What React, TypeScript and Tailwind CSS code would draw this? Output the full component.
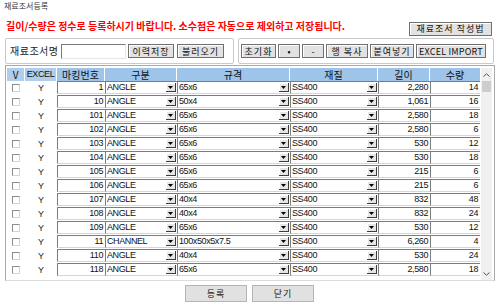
import React from "react";

const KR = "font-['Noto_Sans_CJK_KR','Noto_Sans',sans-serif]";
const NUM = "font-['Liberation_Sans','Noto_Sans_CJK_KR',sans-serif]";

type Row = {
  no: string;
  kind: string;
  spec: string;
  mat: string;
  len: string;
  qty: string;
};

const rows: Row[] = [
  { no: "1", kind: "ANGLE", spec: "65x6", mat: "SS400", len: "2,280", qty: "14" },
  { no: "10", kind: "ANGLE", spec: "50x4", mat: "SS400", len: "1,061", qty: "16" },
  { no: "101", kind: "ANGLE", spec: "65x6", mat: "SS400", len: "2,580", qty: "18" },
  { no: "102", kind: "ANGLE", spec: "65x6", mat: "SS400", len: "2,580", qty: "6" },
  { no: "103", kind: "ANGLE", spec: "65x6", mat: "SS400", len: "530", qty: "12" },
  { no: "104", kind: "ANGLE", spec: "65x6", mat: "SS400", len: "530", qty: "18" },
  { no: "105", kind: "ANGLE", spec: "65x6", mat: "SS400", len: "215", qty: "6" },
  { no: "106", kind: "ANGLE", spec: "65x6", mat: "SS400", len: "215", qty: "6" },
  { no: "107", kind: "ANGLE", spec: "40x4", mat: "SS400", len: "832", qty: "48" },
  { no: "108", kind: "ANGLE", spec: "40x4", mat: "SS400", len: "832", qty: "24" },
  { no: "109", kind: "ANGLE", spec: "65x6", mat: "SS400", len: "530", qty: "12" },
  { no: "11", kind: "CHANNEL", spec: "100x50x5x7.5", mat: "SS400", len: "6,260", qty: "4" },
  { no: "110", kind: "ANGLE", spec: "40x4", mat: "SS400", len: "530", qty: "24" },
  { no: "118", kind: "ANGLE", spec: "65x6", mat: "SS400", len: "2,580", qty: "18" },
];

function WinButton({ children, className }: { children: React.ReactNode; className?: string }) {
  return (
    <button
      type="button"
      className={`flex h-[14px] items-center justify-center whitespace-nowrap border border-[#6f6f6f] bg-[#e2e2e2] text-[9px] leading-none text-[#111] shadow-[inset_1px_1px_0_#fff] ${KR} ${className ?? ""}`}
    >
      {children}
    </button>
  );
}

function Arrow() {
  return (
    <span className="absolute bottom-[1px] right-[1px] flex h-[9px] w-[10px] items-center justify-center border-b border-r border-[#3c3c3c] bg-[#e6e6e6] shadow-[inset_1px_1px_0_#fff]">
      <svg width="5" height="3" viewBox="0 0 5 3">
        <path d="M0 0h5L2.5 3z" fill="#000" />
      </svg>
    </span>
  );
}

function EditCell({ w, children, align = "right" }: { w: string; children: React.ReactNode; align?: "left" | "right" }) {
  return (
    <div
      className={`relative h-[13px] shrink-0 overflow-hidden whitespace-nowrap border-l border-t border-[#7c7c7c] border-b-[#d6d6d6] border-b bg-white text-[9px] leading-[11px] tracking-[-0.4px] text-[#111] ${NUM} ${w} ${
        align === "right" ? "pr-[2px] text-right" : "pl-[1px] text-left"
      }`}
    >
      {children}
    </div>
  );
}

function ComboCell({ w, value }: { w: string; value: string }) {
  return (
    <EditCell w={w} align="left">
      {value}
      <Arrow />
    </EditCell>
  );
}

export default function App() {
  return (
    <div className={`relative h-[306px] w-[499px] overflow-hidden bg-white text-black ${KR}`}>
      {/* 제목 */}
      <div className="pl-[4px] pt-[1px] text-[8px] leading-[10px] text-[#333]">재료조서등록</div>

      {/* 안내 */}
      <div className="mt-[8px] flex h-[14px] items-center justify-between pl-[6px] pr-[7px]">
        <span className="text-[10px] font-bold leading-none text-[#ff0000]">
          길이/수량은 정수로 등록하시기 바랍니다. 소수점은 자동으로 제외하고 저장됩니다.
        </span>
        <WinButton className="mt-[5px] w-[83px] tracking-[1px]">재료조서 작성법</WinButton>
      </div>

      {/* 툴바 */}
      <div className="mt-[5px] flex h-[26px] gap-[4px] pl-[5px] pr-[5px]">
        <div className="flex w-[229px] items-center rounded-[2px] border border-[#c9c9c9] pl-[4px] shadow-[inset_1px_1px_0_#fff]">
          <span className="w-[51px] text-[10px] leading-none tracking-[0.5px] text-[#222]">재료조서명</span>
          <span className="h-[15px] w-[65px] border-l border-t border-[#7a7a7a] border-b border-r border-b-[#e5e5e5] border-r-[#e5e5e5] bg-white" />
          <WinButton className="ml-[2px] w-[46px] tracking-[1px]">이력저장</WinButton>
          <WinButton className="ml-[3px] w-[47px] tracking-[1px]">불러오기</WinButton>
        </div>
        <div className="flex flex-1 items-center gap-[2px] rounded-[2px] border border-[#c9c9c9] pl-[2px] shadow-[inset_1px_1px_0_#fff]">
          <WinButton className="w-[35px] tracking-[1px]">초기화</WinButton>
          <WinButton className="w-[22px]">•</WinButton>
          <WinButton className="w-[22px]">-</WinButton>
          <WinButton className="w-[42px] tracking-[1px]">행 복사</WinButton>
          <WinButton className="w-[44px] tracking-[1px]">붙여넣기</WinButton>
          <WinButton className={`w-[70px] tracking-[0.2px] ${NUM}`}>EXCEL IMPORT</WinButton>
        </div>
      </div>

      {/* 그리드 */}
      <div className="ml-[5px] mt-[1px] flex h-[216px] w-[490px] border border-[#a9a9a9] border-b-[#dcdcdc] pl-[1px] pt-[2px]">
        <div className="w-[474px]">
          <div className="flex h-[13px] text-[10px] leading-[13px] text-[#111]">
            <div className="w-[18px] border-r border-white bg-[#b0cdec] text-center">V</div>
            <div className={`w-[32px] border-r border-white bg-[#b0cdec] text-center text-[9px] tracking-[-0.4px] ${NUM}`}>EXCEL</div>
            <div className="w-[48px] border-r border-white bg-[#9ec4ea] text-center">마킹번호</div>
            <div className="w-[72px] border-r border-white bg-[#9ec4ea] text-center">구분</div>
            <div className="w-[113px] border-r border-white bg-[#9ec4ea] text-center">규격</div>
            <div className="w-[88px] border-r border-white bg-[#9ec4ea] text-center">재질</div>
            <div className="w-[52px] border-r border-white bg-[#9ec4ea] text-center">길이</div>
            <div className="w-[50px] bg-[#9ec4ea] text-center">수량</div>
          </div>
          {rows.map((r) => (
            <div key={r.no} className="flex h-[14px] items-start">
              <div className="flex h-[14px] w-[18px] items-center pl-[5px]">
                <span className="h-[8px] w-[8px] border border-[#8c8c8c] border-r-[#d4d4d4] border-b-[#d4d4d4] bg-white" />
              </div>
              <div className={`h-[14px] w-[32px] text-center text-[9px] leading-[14px] text-[#222] ${NUM}`}>Y</div>
              <EditCell w="w-[48px]">{r.no}</EditCell>
              <ComboCell w="w-[72px]" value={r.kind} />
              <ComboCell w="w-[113px]" value={r.spec} />
              <ComboCell w="w-[88px]" value={r.mat} />
              <EditCell w="w-[52px]">{r.len}</EditCell>
              <EditCell w="w-[50px]">{r.qty}</EditCell>
            </div>
          ))}
        </div>
        <div className="flex w-[11px] flex-col items-center bg-[#f0f0f0]">
          <svg className="mt-[5px]" width="7" height="4" viewBox="0 0 7 4">
            <path d="M0.5 3.5L3.5 0.8L6.5 3.5" stroke="#555" strokeWidth="1" fill="none" />
          </svg>
          <span className="mt-[4px] h-[11px] w-[9px] bg-[#cdcdcd]" />
          <span className="flex-1" />
          <svg className="mb-[4px]" width="7" height="4" viewBox="0 0 7 4">
            <path d="M0.5 0.5L3.5 3.2L6.5 0.5" stroke="#555" strokeWidth="1" fill="none" />
          </svg>
        </div>
      </div>

      {/* 하단 버튼 */}
      <div className="mt-[4px] flex justify-center gap-[5px]">
        <button type="button" className="h-[17px] w-[62px] border border-[#b5b5b5] bg-[#e1e1e1] text-[9px] leading-none tracking-[1px] text-[#222]">
          등록
        </button>
        <button type="button" className="h-[17px] w-[62px] border border-[#b5b5b5] bg-[#e1e1e1] text-[9px] leading-none tracking-[1px] text-[#222]">
          닫기
        </button>
      </div>
    </div>
  );
}
